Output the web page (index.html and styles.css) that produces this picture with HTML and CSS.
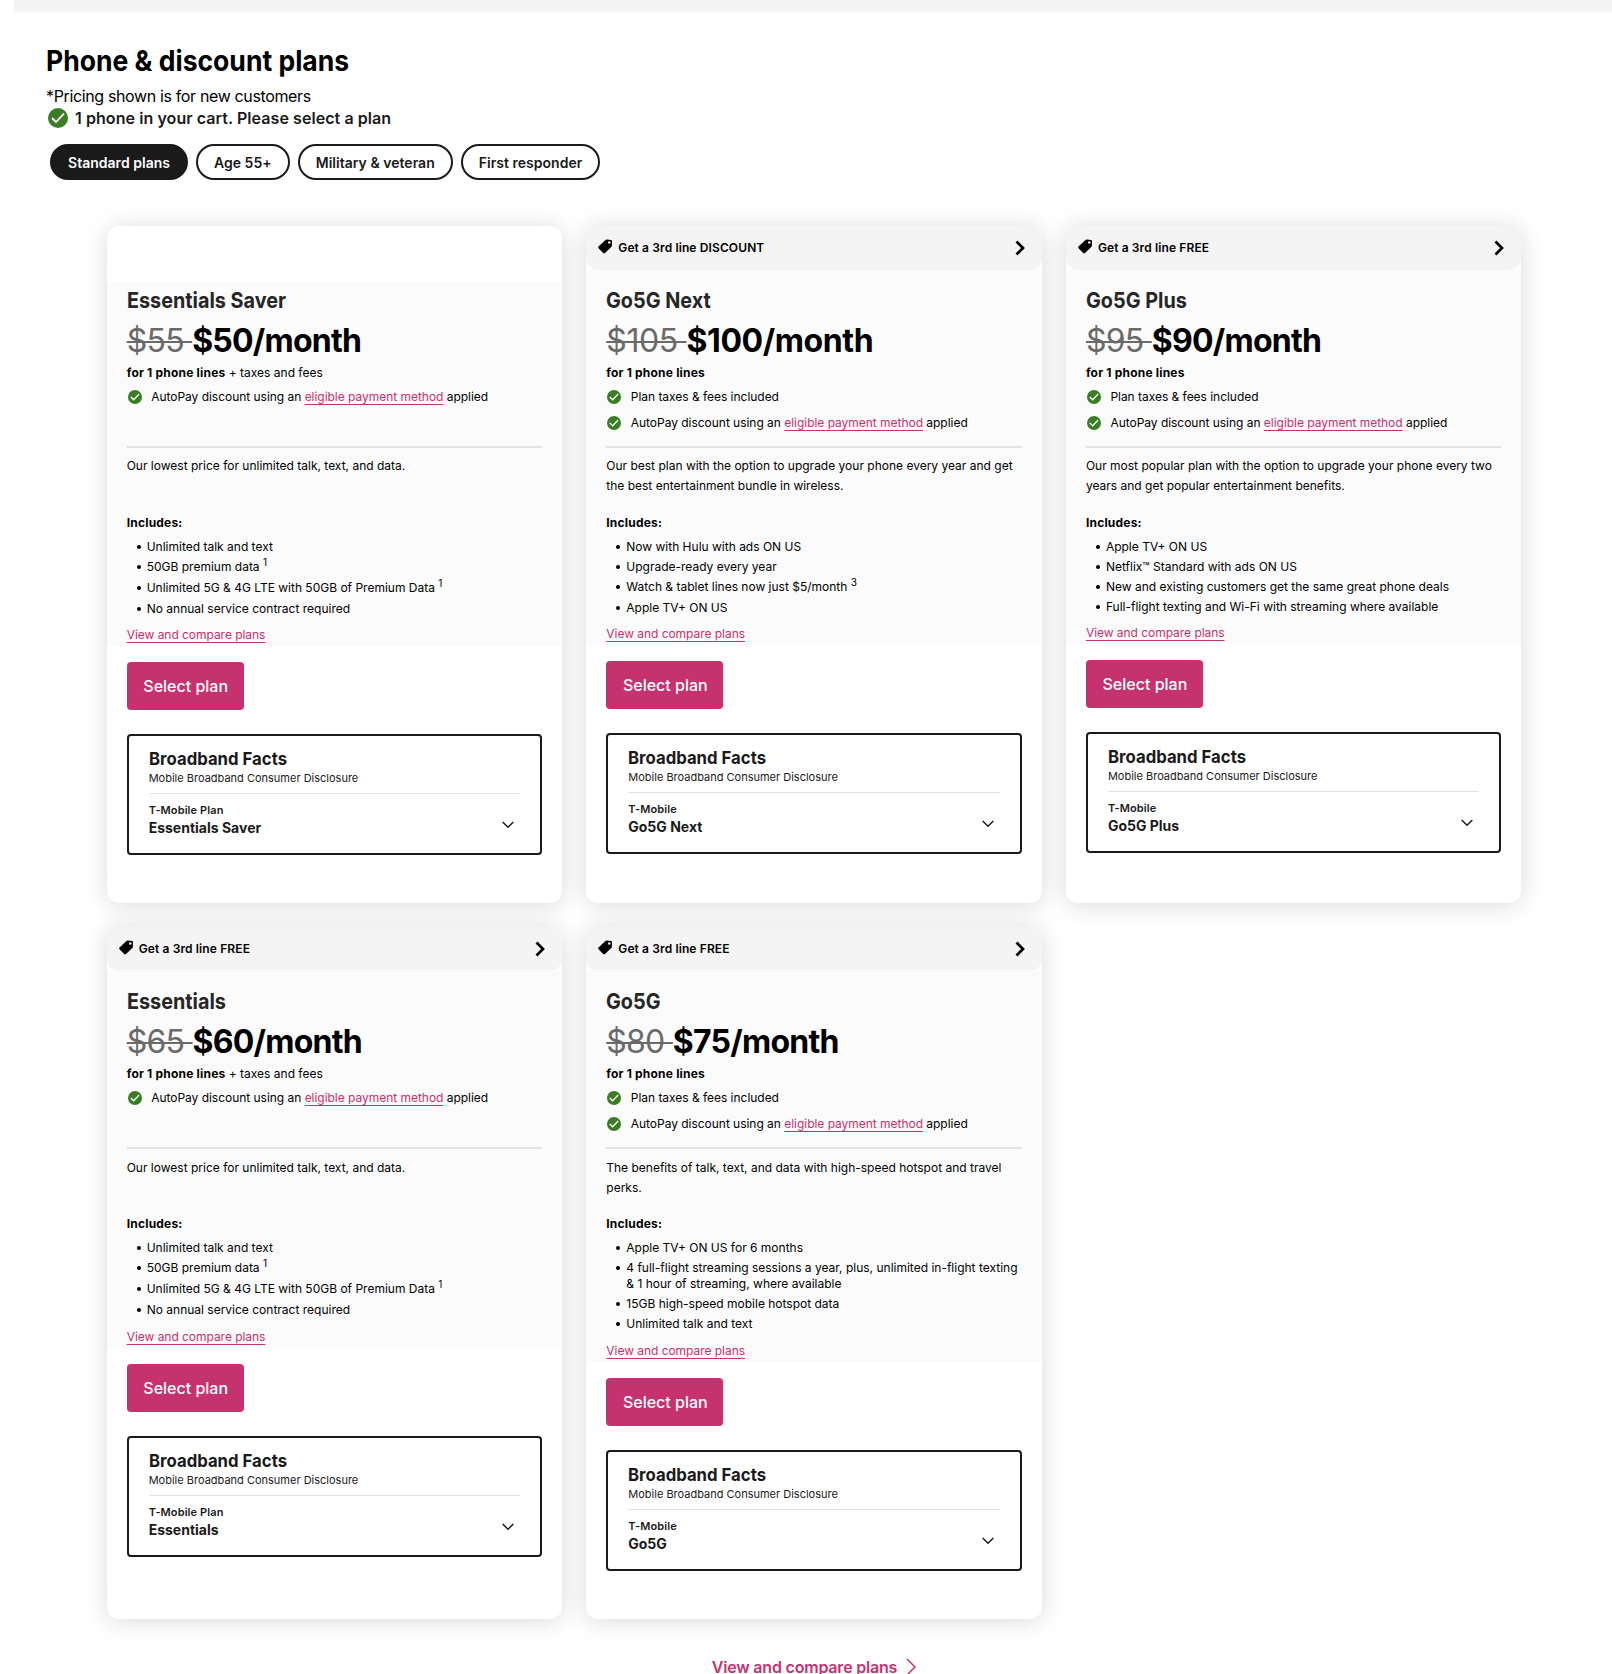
FILE: index.html
```
<!DOCTYPE html>
<html lang="en">
<head>
    <meta charset="UTF-8">
    <meta name="viewport" content="width=device-width, initial-scale=1.0">
    <title>Phone & discount plans</title>
    <link rel="stylesheet" href="styles.css">
</head>
<body>
    <!-- shared icons -->
    <svg width="0" height="0" class="sprite">
      <symbol id="check" viewBox="0 0 20 20">
        <circle cx="10" cy="10" r="10" fill="#3a7d24"/>
        <path d="M4 10l4 4 8-8.300" fill="none" stroke="#fff" stroke-width="1.800"/>
      </symbol>
      <symbol id="tag" viewBox="0 0 16 16">
        <path fill-rule="evenodd" d="M8.2 1.2Q8.9.5 9.9.6L14 1q.9.1 1 1l-.1 4.500q0 .8-.6 1.400l-6.300 6q-.9.8-1.800 0L1.500 9.300q-.8-.9 0-1.800zM12.300 2.200a1.300 1.300 0 1 0 0 2.600 1.300 1.300 0 0 0 0-2.600z"/>
      </symbol>
      <symbol id="arrow" viewBox="0 0 10 16">
        <path d="M1.500 1.500l6.500 6.500-6.500 6.500" fill="none" stroke="#000" stroke-width="2.700"/>
      </symbol>
      <symbol id="down" viewBox="0 0 12 8">
        <path d="M.7 1l5.300 5.300L11.300 1" fill="none" stroke="#1a1a1a" stroke-width="1.500"/>
      </symbol>
    </svg>

    <div class="topbar"></div>

    <div class="header">
      <h1><span>Phone &amp; discount plans</span></h1>
      <p class="pricing">*Pricing shown is for new customers</p>
      <p class="cart"><svg><use href="#check"/></svg>1 phone in your cart. Please select a plan</p>
      <div class="tabs">
        <button class="tab active">Standard plans</button>
        <button class="tab">Age 55+</button>
        <button class="tab">Military &amp; veteran</button>
        <button class="tab">First responder</button>
      </div>
    </div>

    <div class="plans">
      <div class="card">
        <div class="no-banner"></div>
        <div class="details">
          <h2><span>Essentials Saver</span></h2>
          <p class="price"><s>$55 </s><b>$50/month</b></p>
          <p class="lines"><b>for 1 phone lines</b> + taxes and fees</p>
          <div class="perks">
            <p><svg><use href="#check"/></svg><span>AutoPay discount using an <a href="#">eligible payment method</a> applied</span></p>
          </div>
          <p class="desc">Our lowest price for unlimited talk, text, and data.</p>
          <h3>Includes:</h3>
          <ul>
            <li>Unlimited talk and text</li>
            <li class="note">50GB premium data <sup>1</sup></li>
            <li class="note">Unlimited 5G &amp; 4G LTE with 50GB of Premium Data <sup>1</sup></li>
            <li>No annual service contract required</li>
          </ul>
          <a class="compare" href="#">View and compare plans</a>
        </div>
        <button class="select">Select plan</button>
        <div class="facts">
          <h4><span>Broadband Facts</span></h4>
          <p class="disclosure">Mobile Broadband Consumer Disclosure</p>
          <div class="facts-row">
            <div><p class="brand">T-Mobile Plan</p><p class="plan">Essentials Saver</p></div>
            <svg><use href="#down"/></svg>
          </div>
        </div>
      </div>

      <div class="card">
        <div class="banner"><svg class="tag"><use href="#tag"/></svg>Get a 3rd line DISCOUNT<svg class="arrow"><use href="#arrow"/></svg></div>
        <div class="details">
          <h2><span>Go5G Next</span></h2>
          <p class="price wide"><s>$105 </s><b>$100/month</b></p>
          <p class="lines"><b>for 1 phone lines</b></p>
          <div class="perks">
            <p><svg><use href="#check"/></svg><span>Plan taxes &amp; fees included</span></p>
            <p><svg><use href="#check"/></svg><span>AutoPay discount using an <a href="#">eligible payment method</a> applied</span></p>
          </div>
          <p class="desc">Our best plan with the option to upgrade your phone every year and get the best entertainment bundle in wireless.</p>
          <h3>Includes:</h3>
          <ul>
            <li>Now with Hulu with ads ON US</li>
            <li>Upgrade-ready every year</li>
            <li class="note">Watch &amp; tablet lines now just $5/month <sup>3</sup></li>
            <li>Apple TV+ ON US</li>
          </ul>
          <a class="compare" href="#">View and compare plans</a>
        </div>
        <button class="select">Select plan</button>
        <div class="facts">
          <h4><span>Broadband Facts</span></h4>
          <p class="disclosure">Mobile Broadband Consumer Disclosure</p>
          <div class="facts-row">
            <div><p class="brand">T-Mobile</p><p class="plan">Go5G Next</p></div>
            <svg><use href="#down"/></svg>
          </div>
        </div>
      </div>

      <div class="card">
        <div class="banner"><svg class="tag"><use href="#tag"/></svg>Get a 3rd line FREE<svg class="arrow"><use href="#arrow"/></svg></div>
        <div class="details">
          <h2><span>Go5G Plus</span></h2>
          <p class="price"><s>$95 </s><b>$90/month</b></p>
          <p class="lines"><b>for 1 phone lines</b></p>
          <div class="perks">
            <p><svg><use href="#check"/></svg><span>Plan taxes &amp; fees included</span></p>
            <p><svg><use href="#check"/></svg><span>AutoPay discount using an <a href="#">eligible payment method</a> applied</span></p>
          </div>
          <p class="desc">Our most popular plan with the option to upgrade your phone every two years and get popular entertainment benefits.</p>
          <h3>Includes:</h3>
          <ul>
            <li>Apple TV+ ON US</li>
            <li>Netflix™ Standard with ads ON US</li>
            <li>New and existing customers get the same great phone deals</li>
            <li>Full-flight texting and Wi-Fi with streaming where available</li>
          </ul>
          <a class="compare" href="#">View and compare plans</a>
        </div>
        <button class="select">Select plan</button>
        <div class="facts">
          <h4><span>Broadband Facts</span></h4>
          <p class="disclosure">Mobile Broadband Consumer Disclosure</p>
          <div class="facts-row">
            <div><p class="brand">T-Mobile</p><p class="plan">Go5G Plus</p></div>
            <svg><use href="#down"/></svg>
          </div>
        </div>
      </div>

      <div class="card second-row">
        <div class="banner"><svg class="tag"><use href="#tag"/></svg>Get a 3rd line FREE<svg class="arrow"><use href="#arrow"/></svg></div>
        <div class="details">
          <h2><span>Essentials</span></h2>
          <p class="price"><s>$65 </s><b>$60/month</b></p>
          <p class="lines"><b>for 1 phone lines</b> + taxes and fees</p>
          <div class="perks">
            <p><svg><use href="#check"/></svg><span>AutoPay discount using an <a href="#">eligible payment method</a> applied</span></p>
          </div>
          <p class="desc">Our lowest price for unlimited talk, text, and data.</p>
          <h3>Includes:</h3>
          <ul>
            <li>Unlimited talk and text</li>
            <li class="note">50GB premium data <sup>1</sup></li>
            <li class="note">Unlimited 5G &amp; 4G LTE with 50GB of Premium Data <sup>1</sup></li>
            <li>No annual service contract required</li>
          </ul>
          <a class="compare" href="#">View and compare plans</a>
        </div>
        <button class="select">Select plan</button>
        <div class="facts">
          <h4><span>Broadband Facts</span></h4>
          <p class="disclosure">Mobile Broadband Consumer Disclosure</p>
          <div class="facts-row">
            <div><p class="brand">T-Mobile Plan</p><p class="plan">Essentials</p></div>
            <svg><use href="#down"/></svg>
          </div>
        </div>
      </div>

      <div class="card second-row">
        <div class="banner"><svg class="tag"><use href="#tag"/></svg>Get a 3rd line FREE<svg class="arrow"><use href="#arrow"/></svg></div>
        <div class="details">
          <h2><span>Go5G</span></h2>
          <p class="price"><s>$80 </s><b>$75/month</b></p>
          <p class="lines"><b>for 1 phone lines</b></p>
          <div class="perks">
            <p><svg><use href="#check"/></svg><span>Plan taxes &amp; fees included</span></p>
            <p><svg><use href="#check"/></svg><span>AutoPay discount using an <a href="#">eligible payment method</a> applied</span></p>
          </div>
          <p class="desc">The benefits of talk, text, and data with high-speed hotspot and travel perks.</p>
          <h3>Includes:</h3>
          <ul>
            <li>Apple TV+ ON US for 6 months</li>
            <li>4 full-flight streaming sessions a year, plus, unlimited in-flight texting &amp; 1 hour of streaming, where available</li>
            <li>15GB high-speed mobile hotspot data</li>
            <li>Unlimited talk and text</li>
          </ul>
          <a class="compare" href="#">View and compare plans</a>
        </div>
        <button class="select">Select plan</button>
        <div class="facts">
          <h4><span>Broadband Facts</span></h4>
          <p class="disclosure">Mobile Broadband Consumer Disclosure</p>
          <div class="facts-row">
            <div><p class="brand">T-Mobile</p><p class="plan">Go5G</p></div>
            <svg><use href="#down"/></svg>
          </div>
        </div>
      </div>
    </div>

    <a class="compare-all" href="#">View and compare plans
      <svg viewBox="0 0 10 18"><path d="M1 1l8 8-8 8" fill="none" stroke="#c6316f" stroke-width="1.500"/></svg>
    </a>
</body>
</html>
```
FILE: styles.css
```
* {
  box-sizing: border-box;
}

body {
  margin: 0;
  height: 1674px;
  overflow: hidden;
  background: #fff;
  color: #000;
  font-family: Inter, "Liberation Sans", sans-serif;
  font-size: 12px;
}

h1, h2, h3, h4, p, ul {
  margin: 0;
  padding: 0;
}

b {
  font-weight: 700;
}

button {
  font-family: inherit;
}

.sprite {
  display: block;
}

.topbar {
  height: 12px;
  margin-left: 14px;
  background: #f4f4f4;
}

.header {
  padding: 28px 0 0 46px;
}

/* condensed headings */
h1 span, h2 span, h4 span {
  display: inline-block;
  transform: scaleX(0.9);
  transform-origin: left;
}

h1 {
  height: 44px;
  font-size: 29px;
  line-height: 42px;
  font-weight: 700;
}

h1 span {
  transform: scaleX(0.915);
}

.pricing {
  font-size: 16px;
  line-height: 24px;
  letter-spacing: -0.36px;
}

.cart {
  display: flex;
  align-items: center;
  gap: 7px;
  padding-left: 2px;
  height: 20px;
  font-size: 16px;
  font-weight: 600;
  letter-spacing: 0.07px;
  color: #1a1a1a;
}

.cart svg {
  width: 20px;
  height: 20px;
}

.tabs {
  display: flex;
  gap: 8px;
  padding: 16px 0 0 4px;
}

.tab {
  height: 36px;
  padding: 0 16px;
  border: 2px solid #1a1a1a;
  border-radius: 18px;
  background: #fff;
  color: #1a1a1a;
  font-size: 14px;
  font-weight: 600;
  letter-spacing: 0.02px;
}

.tab.active {
  background: #1a1a1a;
  color: #fff;
}

.plans {
  display: grid;
  grid-template-columns: repeat(3, 1fr);
  grid-template-rows: 677px 692px;
  gap: 24px;
  margin: 46px 90.500px 0 106.700px;
}

.card {
  border-radius: 12px;
  background: #fff;
  box-shadow: 0 2px 24px rgba(0, 0, 0, 0.15);
}

.banner {
  display: flex;
  align-items: center;
  height: 44px;
  padding: 0 17px 2px 11px;
  border-radius: 12px;
  background: #f4f4f4;
  font-weight: 600;
  letter-spacing: 0.12px;
}

.tag {
  width: 16px;
  height: 16px;
  margin: -1px 5px 0 0;
}

.arrow {
  width: 10px;
  height: 16px;
  margin: 2px 0 0 auto;
}

.no-banner {
  height: 56px;
}

.details {
  padding: 16px 20px 0;
  background: #fbfbfb;
}

.no-banner + .details {
  padding-top: 4px;
}

h2 {
  height: 30px;
  color: #262626;
  font-size: 22px;
  line-height: 28px;
}

.price {
  height: 47px;
  padding-top: 1px;
  font-size: 32px;
  line-height: 48px;
  letter-spacing: -0.75px;
  white-space: pre;
}

.price.wide {
  letter-spacing: -0.4px;
}

.price s {
  color: #6a6a6a;
  font-weight: 400;
  text-decoration-thickness: 2px;
}

.lines {
  line-height: 20px;
}

.lines b, h3 {
  letter-spacing: 0.2px;
}

.perks {
  height: 65px;
  padding-top: 1px;
  border-bottom: 2px solid #e3e3e3;
}

.perks p {
  display: flex;
  align-items: center;
  gap: 9.500px;
  height: 26px;
  padding-left: 1px;
  line-height: 20px;
  letter-spacing: -0.03px;
}

.perks svg {
  width: 14px;
  height: 14px;
}

a {
  color: #c6316f;
  text-underline-offset: 3px;
}

.desc {
  height: 65px;
  padding-top: 8px;
  line-height: 20px;
}

.second-row .desc {
  padding-top: 9px;
}

h3 {
  font-size: 12px;
  line-height: 20px;
}

ul {
  padding: 6px 0 0 20px;
  list-style: none;
}

.second-row ul {
  padding-bottom: 1px;
}

li {
  margin-bottom: 4px;
  line-height: 16px;
}

li::before {
  content: "";
  display: inline-block;
  width: 4px;
  height: 4px;
  margin: 0 6px 2px -10px;
  border-radius: 2px;
  background: #000;
}

li.note {
  height: 17px;
}

sup {
  font-size: 10px;
  line-height: 0;
}

.compare {
  display: block;
  height: 25px;
  padding-top: 5px;
  line-height: 18px;
  letter-spacing: -0.04px;
}

.select {
  display: block;
  width: 117px;
  height: 48px;
  margin: 16px 20px 24px;
  padding: 0 0 1px 1px;
  border: 0;
  border-radius: 4px;
  background: #c6316f;
  color: #fff;
  font-size: 16px;
  font-weight: 500;
}

.facts {
  height: 121px;
  margin: 0 20px;
  padding: 10px 20px;
  border: 2px solid #1a1a1a;
  border-radius: 4px;
  color: #1a1a1a;
}

h4 {
  height: 24px;
  font-size: 18px;
  line-height: 25px;
}

h4 span {
  transform: scaleX(0.93);
}

.disclosure {
  padding-bottom: 7px;
  border-bottom: 1px solid #e3e3e3;
  font-size: 11px;
  line-height: 16px;
}

.facts-row {
  display: flex;
  justify-content: space-between;
  align-items: center;
  padding: 8px 6px 0 0;
}

.facts-row svg {
  width: 12px;
  height: 8px;
  margin-top: 10px;
}

.brand {
  font-size: 11px;
  font-weight: 600;
  line-height: 16px;
  letter-spacing: 0.1px;
}

.plan {
  font-size: 14px;
  font-weight: 700;
  line-height: 20px;
}

.compare-all {
  display: flex;
  justify-content: center;
  align-items: center;
  gap: 9px;
  margin-top: 38px;
  padding-left: 16px;
  font-size: 16px;
  font-weight: 600;
  letter-spacing: -0.2px;
  text-decoration: none;
}

.compare-all svg {
  width: 10px;
  height: 18px;
}
```
